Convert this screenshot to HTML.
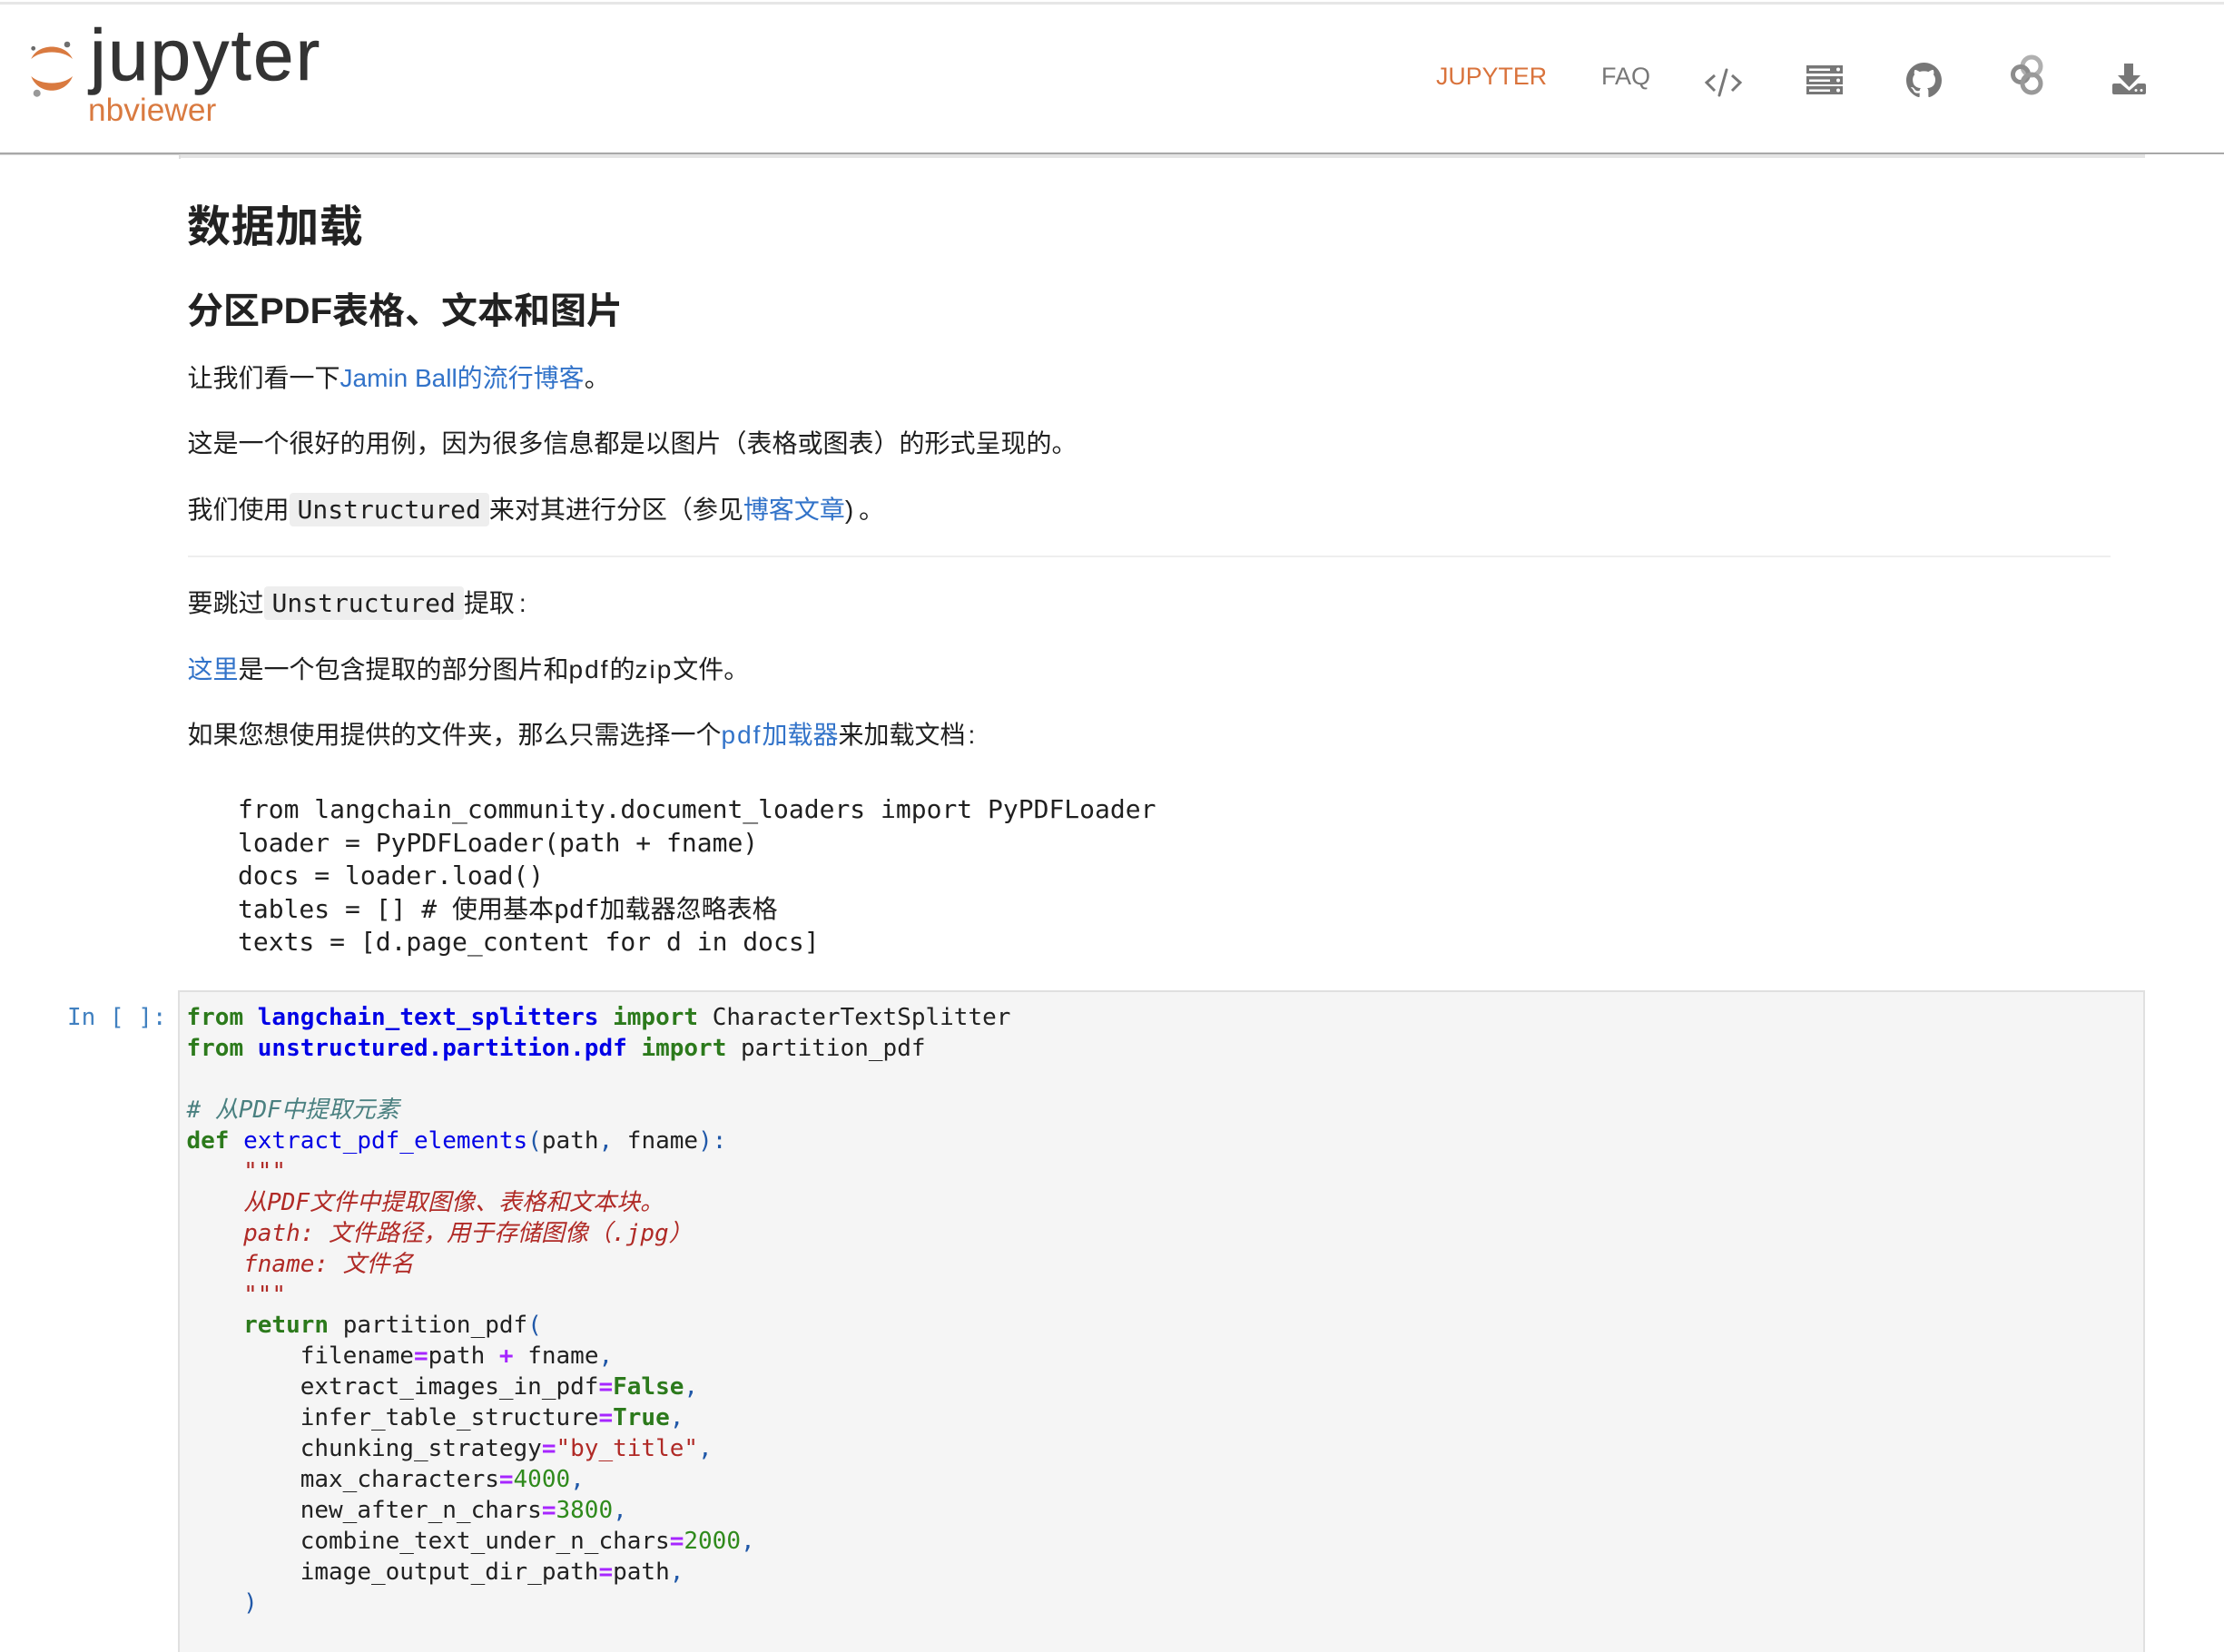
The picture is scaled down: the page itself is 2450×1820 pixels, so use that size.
<!DOCTYPE html>
<html lang="zh"><head><meta charset="utf-8"><title>nbviewer</title>
<style>
html,body{margin:0;padding:0;background:#fff;width:2450px;height:1820px;overflow:hidden}
#w{width:2450px;height:1820px;position:relative;overflow:hidden;font-family:"Liberation Sans","Noto Sans CJK SC",sans-serif;color:#1a1a1a}
.a{position:absolute;white-space:pre}
.t{font-size:28px;line-height:40px;left:206.500px;color:#1f1f1f}
a{color:#3273c9;text-decoration:none}
.l{letter-spacing:2px}
code{font-family:"DejaVu Sans Mono","Noto Sans CJK SC",monospace;font-size:28px;background:#eee;border-radius:4px;padding:0 9px;display:inline-block;line-height:37px}
.m{font-family:"DejaVu Sans Mono","Noto Sans CJK SC",monospace;font-size:28px;line-height:37px;left:262px;color:#1f1f1f}
.c{font-family:"DejaVu Sans Mono","Noto Sans CJK SC",monospace;font-size:26px;line-height:34px;left:205.500px;color:#212121}
.k{color:#2c7a1c;font-weight:bold}.n{color:#0000e6;font-weight:bold}.f{color:#0000e6}
.i{color:#4a8080;font-style:italic}.s{color:#b02a26}.d{color:#b02a26;font-style:italic}
.o{color:#a626ff;font-weight:bold}.p{color:#2058a8}.g{color:#2f8a1c}
</style></head><body><div id="w">
<div class="a" style="left:0;top:2px;width:2450px;height:3px;background:#e6e6e6"></div>
<div class="a" style="left:197px;top:169px;width:2166px;height:5px;background:#e4e4e4"></div>
<div class="a" style="left:197px;top:169px;width:2px;height:6px;background:#ddd"></div>
<div class="a" style="left:0;top:168px;width:2450px;height:2px;background:#a8a8a8"></div>
<div class="a" style="left:0;top:170px;width:197px;height:1px;background:#d8d8d8"></div>
<svg class="a" style="left:30px;top:40px" width="60" height="70" viewBox="30 40 60 70">
<path d="M34.3 65 C42 47 72 47 80 65 C69 55 45 55 34.3 65Z" fill="#d97a40"/>
<path d="M34.3 84 C45 94 69 94 80 84 C72 105 42 105 34.3 84Z" fill="#d97a40"/>
<circle cx="74" cy="49" r="3.3" fill="#6f6f6f"/><circle cx="36.7" cy="53.3" r="2.4" fill="#6a6a6a"/><circle cx="40.7" cy="102.7" r="4" fill="#999"/>
</svg>
<div class="a" style="left:99px;top:17px;font-size:80px;line-height:88px;letter-spacing:2.200px;color:#333;-webkit-text-stroke:.6px #333">jupyter</div>
<div class="a" style="left:97px;top:101px;font-size:35.300px;line-height:42px;color:#d97a40">nbviewer</div>
<div class="a" style="left:1582px;top:68px;font-size:26.800px;line-height:32px;color:#d9733c">JUPYTER</div>
<div class="a" style="left:1764px;top:68px;font-size:27px;line-height:32px;color:#777">FAQ</div>
<svg class="a" style="left:1870px;top:70px" width="56" height="42" viewBox="1870 70 56 42" fill="none" stroke="#777" stroke-width="3"><path d="M1889 83 L1880 91 L1889 100 M1908 83 L1917 91 L1908 100"/><path stroke-linecap="round" d="M1902 77 L1894 105"/></svg>
<svg class="a" style="left:1985px;top:68px" width="50" height="40" viewBox="1985 68 50 40"><g fill="#777"><rect x="1990" y="72" width="40" height="9"/><rect x="1990" y="84" width="40" height="9"/><rect x="1990" y="95" width="40" height="9"/></g><g fill="#fff"><rect x="1993" y="75.500" width="23" height="2.500"/><rect x="1993" y="87.500" width="23" height="2.500"/><rect x="1993" y="98.500" width="23" height="2.500"/><circle cx="2025" cy="76.500" r="2"/><circle cx="2025" cy="88.500" r="2"/><circle cx="2025" cy="99.500" r="2"/></g></svg>
<svg class="a" style="left:2100px;top:69px" width="39" height="39" viewBox="0 0 16 16"><path fill="#777" d="M8 0C3.58 0 0 3.58 0 8c0 3.54 2.29 6.53 5.47 7.59.4.07.55-.17.55-.38 0-.19-.01-.82-.01-1.49-2.01.37-2.53-.49-2.69-.94-.09-.23-.48-.94-.82-1.13-.28-.15-.68-.52-.01-.53.63-.01 1.08.58 1.23.82.72 1.21 1.87.87 2.33.66.07-.52.28-.87.51-1.07-1.78-.2-3.64-.89-3.64-3.95 0-.87.31-1.59.82-2.15-.08-.2-.36-1.02.08-2.12 0 0 .67-.21 2.2.82.64-.18 1.32-.27 2-.27.68 0 1.36.09 2 .27 1.53-1.04 2.2-.82 2.2-.82.44 1.1.16 1.92.08 2.12.51.56.82 1.27.82 2.15 0 3.07-1.87 3.75-3.65 3.95.29.25.54.73.54 1.48 0 1.07-.01 1.93-.01 2.2 0 .21.15.46.55.38A8.013 8.013 0 0016 8c0-4.42-3.58-8-8-8z"/></svg>
<svg class="a" style="left:2210px;top:56px" width="46" height="52" viewBox="2210 56 46 52" fill="none" stroke-width="5"><circle cx="2238" cy="73" r="10" stroke="#b0b0b0"/><circle cx="2226" cy="82" r="8.500" stroke="#8c8c8c"/><circle cx="2238" cy="92" r="10" stroke="#999"/></svg>
<svg class="a" style="left:2322px;top:65px" width="46" height="44" viewBox="2322 65 46 44"><path fill="#777" d="M2340 70H2350V83H2358L2345.500 96L2333 83H2340Z"/><path fill="#777" d="M2329 92H2336L2345.500 100L2355 92H2362Q2364 92 2364 94V102Q2364 104 2362 104H2329Q2327 104 2327 102V94Q2327 92 2329 92Z"/><circle cx="2353" cy="99.500" r="1.500" fill="#fff"/><circle cx="2359" cy="99.500" r="1.500" fill="#fff"/></svg>

<div class="a" style="left:206px;top:221px;font-size:48px;letter-spacing:.6px;line-height:60px;font-weight:bold;color:#222">数据加载</div>
<div class="a" style="left:206px;top:318px;font-size:40px;line-height:50px;font-weight:bold;color:#222">分区PDF表格、文本和图片</div>
<div class="a t" style="top:397px">让我们看一下<a>Jamin Ball的流行博客</a>。</div>
<div class="a t" style="top:469px">这是一个很好的用例，因为很多信息都是以图片（表格或图表）的形式呈现的。</div>
<div class="a t" style="top:542px">我们使用<code>Unstructured</code>来对其进行分区（参见<a>博客文章</a><span style="letter-spacing:6px">)</span>。</div>
<div class="a" style="left:207px;top:612px;width:2118px;height:2px;background:#eee"></div>
<div class="a t" style="top:645px">要跳过<code>Unstructured</code>提取<span style="padding-left:5px">:</span></div>
<div class="a t" style="top:718px"><a>这里</a>是一个包含提取的部分图片和<span class="l">pdf</span>的<span class="l">zip</span>文件。</div>
<div class="a t" style="top:790px">如果您想使用提供的文件夹，那么只需选择一个<a class="l">pdf</a><a>加载器</a>来加载文档<span style="padding-left:3px">:</span></div>
<div class="a m" style="top:873px">from langchain_community.document_loaders import PyPDFLoader</div>
<div class="a m" style="top:910px">loader = PyPDFLoader(path + fname)</div>
<div class="a m" style="top:946px">docs = loader.load()</div>
<div class="a m" style="top:983px">tables = [] # 使用基本pdf加载器忽略表格</div>
<div class="a m" style="top:1019px">texts = [d.page_content for d in docs]</div>

<div class="a" style="left:196px;top:1091px;width:2163px;height:727px;background:#f5f5f5;border:2px solid #e0e0e0;border-bottom:0;box-sizing:content-box"></div>
<div class="a c" style="left:74px;top:1104px;color:#4080c0">In [ ]:</div>
<div class="a c" style="top:1104px"><span class="k">from</span> <span class="n">langchain_text_splitters</span> <span class="k">import</span> CharacterTextSplitter</div>
<div class="a c" style="top:1138px"><span class="k">from</span> <span class="n">unstructured.partition.pdf</span> <span class="k">import</span> partition_pdf</div>
<div class="a c i" style="top:1206px"># 从PDF中提取元素</div>
<div class="a c" style="top:1240px"><span class="k">def</span> <span class="f">extract_pdf_elements</span><span class="p">(</span>path<span class="p">,</span> fname<span class="p">):</span></div>
<div class="a c d" style="top:1274px">    """</div>
<div class="a c d" style="top:1308px">    从PDF文件中提取图像、表格和文本块。</div>
<div class="a c d" style="top:1342px">    path: 文件路径，用于存储图像（.jpg）</div>
<div class="a c d" style="top:1376px">    fname: 文件名</div>
<div class="a c d" style="top:1410px">    """</div>
<div class="a c" style="top:1443px">    <span class="k">return</span> partition_pdf<span class="p">(</span></div>
<div class="a c" style="top:1477px">        filename<span class="o">=</span>path <span class="o">+</span> fname<span class="p">,</span></div>
<div class="a c" style="top:1511px">        extract_images_in_pdf<span class="o">=</span><span class="k">False</span><span class="p">,</span></div>
<div class="a c" style="top:1545px">        infer_table_structure<span class="o">=</span><span class="k">True</span><span class="p">,</span></div>
<div class="a c" style="top:1579px">        chunking_strategy<span class="o">=</span><span class="s">"by_title"</span><span class="p">,</span></div>
<div class="a c" style="top:1613px">        max_characters<span class="o">=</span><span class="g">4000</span><span class="p">,</span></div>
<div class="a c" style="top:1647px">        new_after_n_chars<span class="o">=</span><span class="g">3800</span><span class="p">,</span></div>
<div class="a c" style="top:1681px">        combine_text_under_n_chars<span class="o">=</span><span class="g">2000</span><span class="p">,</span></div>
<div class="a c" style="top:1715px">        image_output_dir_path<span class="o">=</span>path<span class="p">,</span></div>
<div class="a c p" style="top:1749px">    )</div>
</div></body></html>
